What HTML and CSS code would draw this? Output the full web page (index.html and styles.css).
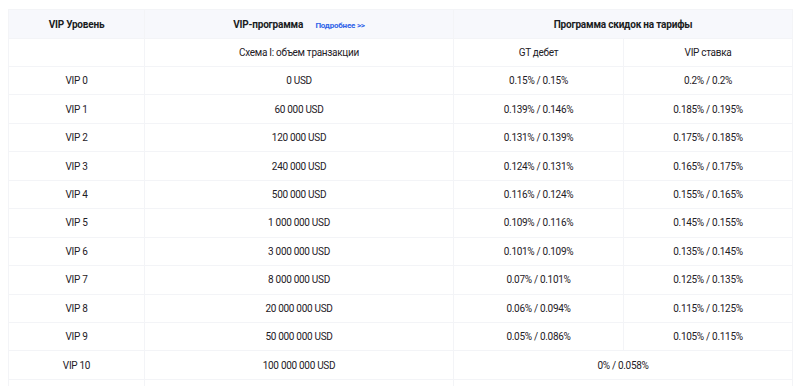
FILE: index.html
```html
<!DOCTYPE html>
<html lang="ru">
<head>
<meta charset="utf-8">
<link rel="stylesheet" href="styles.css">
</head>
<body>
<table class="vip">
  <colgroup>
    <col class="c1"><col class="c2"><col class="c3"><col class="c4">
  </colgroup>
  <thead>
    <tr class="head">
      <th>VIP Уровень</th>
      <th>VIP-программа <a class="more" href="#">Подробнее &gt;&gt;</a></th>
      <th colspan="2">Программа скидок на тарифы</th>
    </tr>
  </thead>
  <tbody>
    <tr><td></td><td>Схема I: объем транзакции</td><td>GT дебет</td><td>VIP ставка</td></tr>
    <tr><td>VIP 0</td><td>0 USD</td><td>0.15% / 0.15%</td><td>0.2% / 0.2%</td></tr>
    <tr><td>VIP 1</td><td>60 000 USD</td><td>0.139% / 0.146%</td><td>0.185% / 0.195%</td></tr>
    <tr><td>VIP 2</td><td>120 000 USD</td><td>0.131% / 0.139%</td><td>0.175% / 0.185%</td></tr>
    <tr><td>VIP 3</td><td>240 000 USD</td><td>0.124% / 0.131%</td><td>0.165% / 0.175%</td></tr>
    <tr><td>VIP 4</td><td>500 000 USD</td><td>0.116% / 0.124%</td><td>0.155% / 0.165%</td></tr>
    <tr><td>VIP 5</td><td>1 000 000 USD</td><td>0.109% / 0.116%</td><td>0.145% / 0.155%</td></tr>
    <tr><td>VIP 6</td><td>3 000 000 USD</td><td>0.101% / 0.109%</td><td>0.135% / 0.145%</td></tr>
    <tr><td>VIP 7</td><td>8 000 000 USD</td><td>0.07% / 0.101%</td><td>0.125% / 0.135%</td></tr>
    <tr><td>VIP 8</td><td>20 000 000 USD</td><td>0.06% / 0.094%</td><td>0.115% / 0.125%</td></tr>
    <tr><td>VIP 9</td><td>50 000 000 USD</td><td>0.05% / 0.086%</td><td>0.105% / 0.115%</td></tr>
    <tr><td>VIP 10</td><td>100 000 000 USD</td><td colspan="2">0% / 0.058%</td></tr>
    <tr class="tail"><td></td><td></td><td colspan="2"></td></tr>
  </tbody>
</table>
</body>
</html>
```
FILE: styles.css
```css
html, body {
  margin: 0;
  background: #ffffff;
}
body {
  padding: 9px 8px 0 8px;
  font-family: Roboto, "Noto Sans", sans-serif;
  font-size: 10px;
  letter-spacing: -0.3px;
  color: #1e2026;
}
.vip {
  width: 784px;
  table-layout: fixed;
  border-collapse: collapse;
}
.c1 { width: 136px; }
.c2 { width: 309px; }
.c3 { width: 170px; }
.c4 { width: 169px; }
.vip th, .vip td {
  border: 1px solid #f3f4f7;
  text-align: center;
  padding: 0;
  font-weight: 400;
}
.vip tbody tr { height: 28.45px; }
.vip tbody tr:first-child { height: 28px; }
.vip tbody tr.tail { height: 20px; }
.head { height: 29px; }
.head th {
  background: #f7f8fc;
  font-weight: 700;
  letter-spacing: -0.2px;
  color: #1a1c22;
}
.more {
  margin-left: 10px;
  font-size: 8px;
  font-weight: 700;
  letter-spacing: -0.2px;
  color: #2f63e8;
  text-decoration: none;
}
```
